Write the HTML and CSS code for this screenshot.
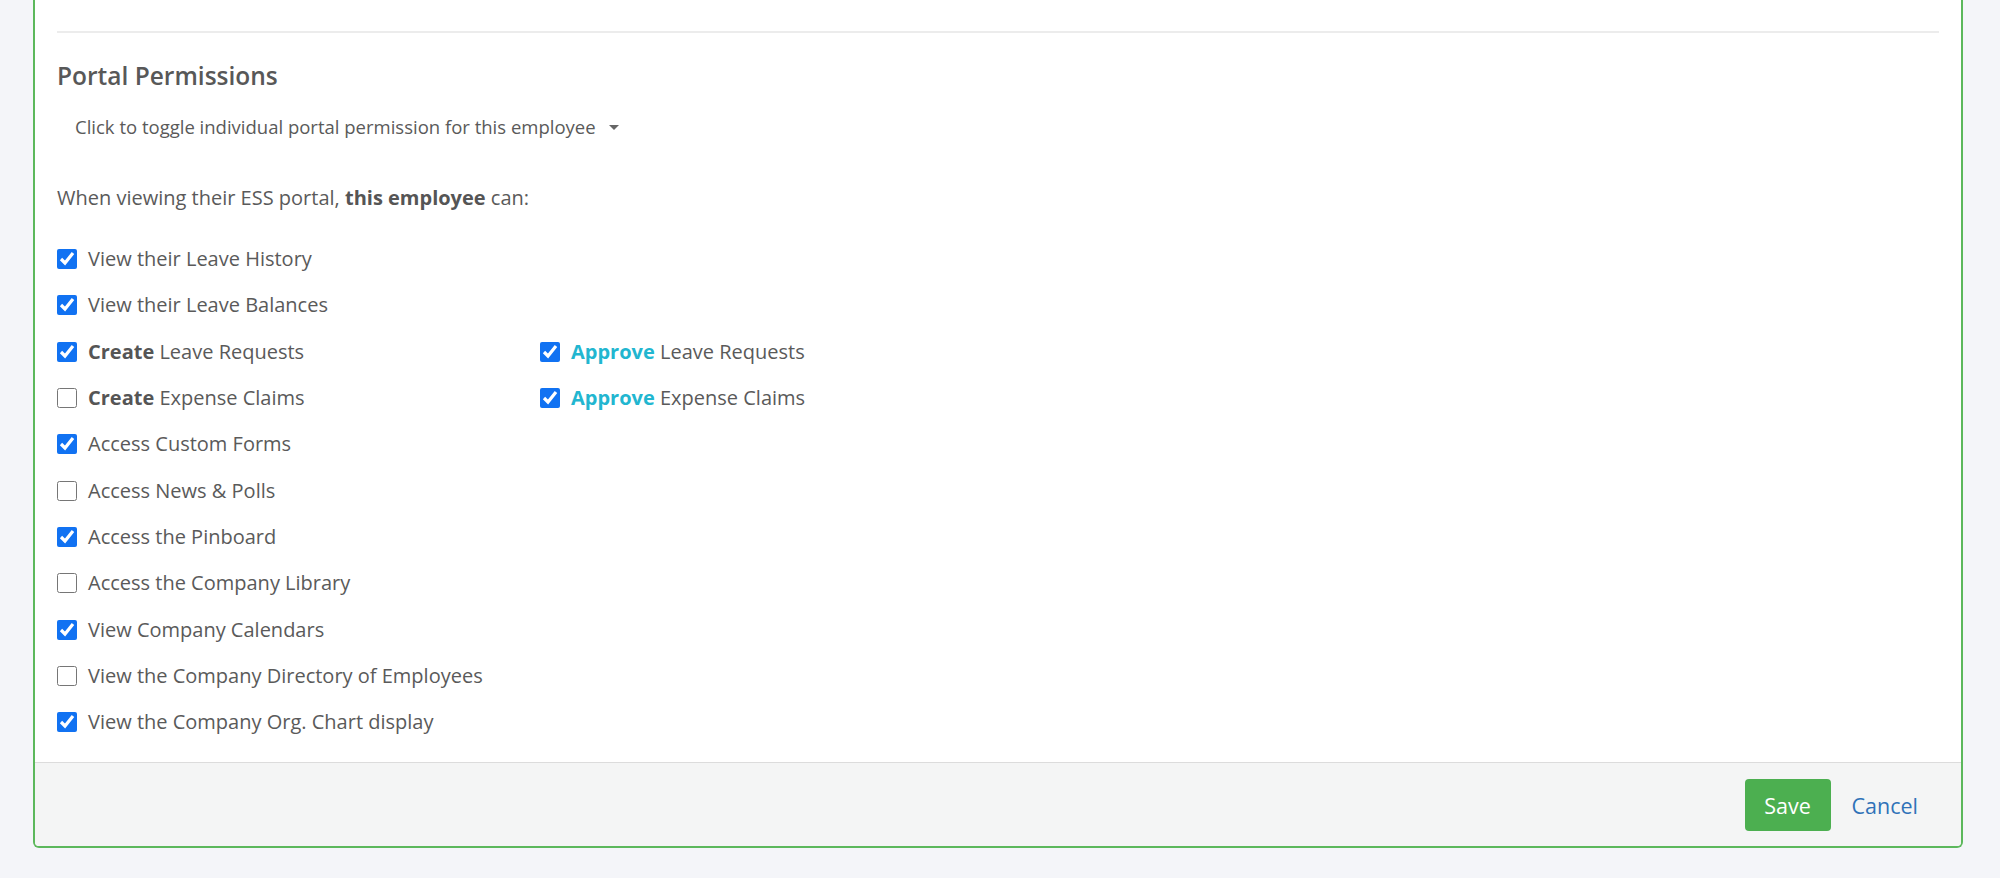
FILE: index.html
```html
<!DOCTYPE html>
<html lang="en">
<head>
    <meta charset="UTF-8">
    <title>Portal Permissions</title>
    <link rel="stylesheet" href="styles.css">
</head>
<body>
    <div class="card">
        <div class="card-body">
            <div class="prev-section"></div>

            <h2>Portal Permissions</h2>
            <button type="button" class="toggle-btn">Click to toggle individual portal permission for this employee <span class="caret"></span></button>

            <p class="intro">When viewing their ESS portal, <b>this employee</b> can:</p>

            <div class="perm-list">
                <div class="perm-row">
                    <label class="perm"><input type="checkbox" checked> View their Leave History</label>
                </div>
                <div class="perm-row">
                    <label class="perm"><input type="checkbox" checked> View their Leave Balances</label>
                </div>
                <div class="perm-row">
                    <label class="perm"><input type="checkbox" checked> <b>Create</b>&nbsp;Leave Requests</label>
                    <label class="perm"><input type="checkbox" checked> <b class="approve">Approve</b>&nbsp;Leave Requests</label>
                </div>
                <div class="perm-row">
                    <label class="perm"><input type="checkbox"> <b>Create</b>&nbsp;Expense Claims</label>
                    <label class="perm"><input type="checkbox" checked> <b class="approve">Approve</b>&nbsp;Expense Claims</label>
                </div>
                <div class="perm-row">
                    <label class="perm"><input type="checkbox" checked> Access Custom Forms</label>
                </div>
                <div class="perm-row">
                    <label class="perm"><input type="checkbox"> Access News &amp; Polls</label>
                </div>
                <div class="perm-row">
                    <label class="perm"><input type="checkbox" checked> Access the Pinboard</label>
                </div>
                <div class="perm-row">
                    <label class="perm"><input type="checkbox"> Access the Company Library</label>
                </div>
                <div class="perm-row">
                    <label class="perm"><input type="checkbox" checked> View Company Calendars</label>
                </div>
                <div class="perm-row">
                    <label class="perm"><input type="checkbox"> View the Company Directory of Employees</label>
                </div>
                <div class="perm-row">
                    <label class="perm"><input type="checkbox" checked> View the Company Org. Chart display</label>
                </div>
            </div>
        </div>

        <div class="card-footer">
            <button type="submit" class="btn-save">Save</button>
            <a href="#" class="btn-cancel">Cancel</a>
        </div>
    </div>
</body>
</html>
```

FILE: styles.css
```css
body {
    margin: 0;
    background: #f4f5f9;
    font-family: 'Open Sans', 'Liberation Sans', sans-serif;
    color: #5a5a5a;
}
.card {
    margin: 0 37px 0 33px;
    background: #fff;
    border: 2px solid #5cb85c;
    border-top: none;
    border-radius: 0 0 6px 6px;
    overflow: hidden;
}
.card-body {
    padding: 0 22px 17px;
}
.prev-section {
    height: 31px;
    border-bottom: 2px solid #ececec;
}
.card-body h2 {
    margin: 28px 0 0;
    font-size: 24.5px;
    line-height: 30px;
    font-weight: 600;
    color: #585858;
}
.toggle-btn {
    display: inline-flex;
    align-items: center;
    margin-top: 18px;
    padding: 6px 18px;
    border: none;
    background: none;
    font-family: inherit;
    font-size: 18.5px;
    line-height: 24px;
    color: #5a5a5a;
    cursor: pointer;
}
.caret {
    display: inline-block;
    margin-left: 13px;
    border-left: 5.5px solid transparent;
    border-right: 5.5px solid transparent;
    border-top: 5.5px solid #666;
}
.intro {
    margin: 40px 0 0;
    font-size: 20px;
    line-height: 26px;
}
.intro b {
    font-weight: 700;
    color: #555;
}
.perm-list {
    margin-top: 25px;
}
.perm-row {
    display: flex;
    height: 46.3px;
    align-items: center;
}
.perm {
    display: flex;
    align-items: center;
    width: 483px;
    font-size: 20px;
    line-height: 26px;
    cursor: pointer;
}
.perm input {
    width: 20px;
    height: 20px;
    margin: 0 11px 0 0;
    accent-color: #1172f2;
}
.perm b {
    font-weight: 700;
    color: #555;
}
.perm b.approve {
    color: #22b6d0;
}
.card-footer {
    display: flex;
    justify-content: flex-end;
    align-items: center;
    gap: 21px;
    padding: 16px 43px 15px;
    background: #f4f5f5;
    border-top: 1px solid #dcdcdc;
}
.btn-save {
    width: 86px;
    height: 52px;
    border: none;
    border-radius: 4px;
    background: #4caf50;
    color: #fff;
    font-family: inherit;
    font-size: 21.5px;
    cursor: pointer;
}
.btn-cancel {
    font-size: 21.5px;
    color: #2f72b8;
    text-decoration: none;
}
```
